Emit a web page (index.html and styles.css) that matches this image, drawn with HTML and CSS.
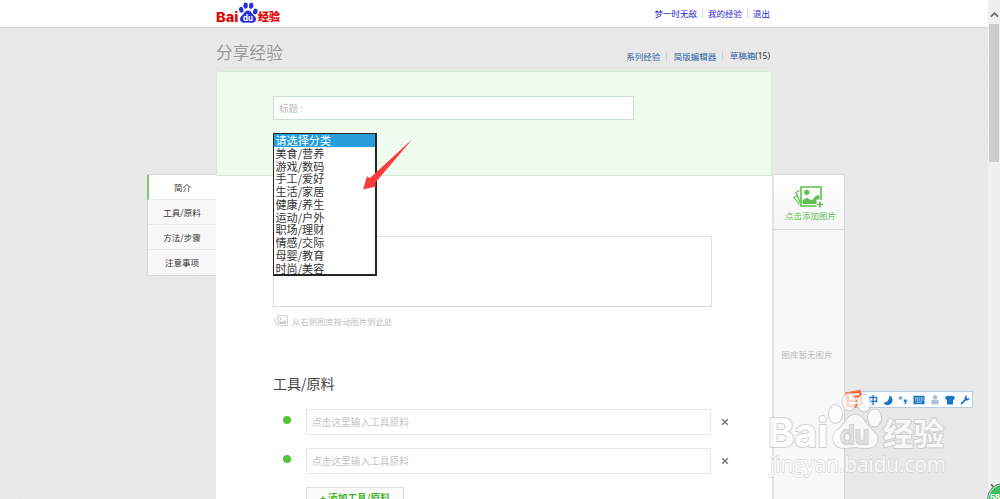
FILE: index.html
```html
<!DOCTYPE html>
<html lang="zh-CN">
<head>
  <meta charset="UTF-8" />
  <title>分享经验</title>
  <link rel="stylesheet" href="styles.css">
</head>
<body>

  <div class="page">
    <header class="topbar">
      <svg class="logo" viewBox="0 0 66 24" role="img" aria-label="Baidu经验">
        <text class="logo-red logo-latin" x="0" y="21.8" font-size="13.5" textLength="22.500" lengthAdjust="spacingAndGlyphs">Bai</text>
        <g fill="#2932e1">
          <ellipse cx="25.2" cy="9.8" rx="2.200" ry="3" transform="rotate(-14 25.2 9.8)"/>
          <ellipse cx="29.6" cy="5.500" rx="2.200" ry="3.1"/>
          <ellipse cx="35.2" cy="5.700" rx="2.200" ry="3.1" transform="rotate(8 35.2 5.7)"/>
          <ellipse cx="39.3" cy="11.500" rx="2.3" ry="2.9" transform="rotate(14 39.3 11.5)"/>
          <path d="M32 10.5c3 0 3.8 3 5.800 4.800c2.200 2 2.500 3.200 2 5c-.8 3-4.500 2.600-7.800 2.300c-3.300.3-7 .7-7.800-2.300c-.5-1.800 0-3.200 2-5c2-1.800 2.800-4.800 5.800-4.800z"/>
        </g>
        <text class="logo-du" x="27" y="20.8" font-size="8.5" textLength="10" lengthAdjust="spacingAndGlyphs">du</text>
        <text class="logo-red" x="42" y="21.3" font-size="11.500" textLength="22" lengthAdjust="spacingAndGlyphs">经验</text>
      </svg>
      <nav class="links user-links">
        <a>梦一时无敌</a><a>我的经验</a><a>退出</a>
      </nav>
    </header>

    <div class="title-row">
      <h1>分享经验</h1>
      <nav class="links tool-links">
        <a>系列经验</a><a>简版编辑器</a><a>草稿箱<span>(15)</span></a>
      </nav>
    </div>

    <div class="main">
      <ul class="side-nav">
        <li class="active">简介</li>
        <li>工具/原料</li>
        <li>方法/步骤</li>
        <li>注意事项</li>
      </ul>

      <div class="editor">
        <section class="base">
          <div class="field title-field">标题 :</div>
          <div class="category">
            <ul class="options">
              <li class="selected">请选择分类</li>
              <li>美食/营养</li>
              <li>游戏/数码</li>
              <li>手工/爱好</li>
              <li>生活/家居</li>
              <li>健康/养生</li>
              <li>运动/户外</li>
              <li>职场/理财</li>
              <li>情感/交际</li>
              <li>母婴/教育</li>
              <li>时尚/美容</li>
            </ul>
            <svg class="arrow" viewBox="0 0 50 52" aria-hidden="true">
              <path d="M49.500 0L12.500 43.500L12.800 47.500L0 50.500L4 37.500L7 39z" fill="#fb3a3a"/>
            </svg>
          </div>
        </section>

        <section class="content">
          <div class="brief"></div>
          <p class="drag-hint">
            <svg viewBox="0 0 14 12" aria-hidden="true">
              <path d="M4 .7h9.300v10H4z" fill="none" stroke="#ccc"/>
              <path d="M5 9V7l2-1 2 1 3-2v4z" fill="#ccc"/>
              <circle cx="7" cy="3.800" r="1.100" fill="#ccc"/>
              <path d="M2.500 2.500L.7 5l2 5" fill="none" stroke="#ccc"/>
            </svg>
            从右侧图库拖动图片到此处
          </p>

          <h2>工具/原料</h2>
          <div class="tool">
            <i class="dot"></i>
            <div class="field">点击这里输入工具原料</div>
            <svg class="remove" viewBox="0 0 8 8"><path d="M1.200 1.200l5.600 5.600M6.800 1.200L1.200 6.800"/></svg>
          </div>
          <div class="tool">
            <i class="dot"></i>
            <div class="field">点击这里输入工具原料</div>
            <svg class="remove" viewBox="0 0 8 8"><path d="M1.200 1.200l5.600 5.600M6.800 1.200L1.200 6.800"/></svg>
          </div>
          <div class="add-tool">+ 添加工具/原料</div>
        </section>
      </div>

      <aside class="gallery">
        <div class="add-picture">
          <svg viewBox="0 0 30 22" aria-hidden="true">
            <path d="M23.500 20H8V1h20v13" fill="none" stroke="#5fc04f" stroke-width="1.600"/>
            <circle cx="13.800" cy="6.300" r="2.600" fill="#5fc04f"/>
            <path d="M9.500 18v-3.500q4-4.500 7.500-1q2 1.500 4-1.500q2-3.500 5.500-2.500v4h-3v4.500z" fill="#5fc04f"/>
            <path d="M27 15.500v6M24 18.500h6" stroke="#5fc04f" stroke-width="1.600"/>
            <path d="M6.500 4.500L3 6.500l4 10M4.500 9.500L1 11.500l5.500 7" fill="none" stroke="#5fc04f" stroke-width="1.200"/>
          </svg>
          <span>点击添加图片</span>
        </div>
        <p class="empty">图库暂无图片</p>
      </aside>
    </div>
  </div>

  <div class="scrollbar">
    <svg class="up" viewBox="0 0 10 8"><path d="M1 6.500L5 2.500l4 4"/></svg>
    <div class="thumb"></div>
    <svg class="down" viewBox="0 0 10 8"><path d="M1 1.500L5 5.500l4-4"/></svg>
  </div>

  <!-- 输入法工具条 -->
  <div class="ime">
    <svg class="sogou" viewBox="0 0 20 20" aria-hidden="true">
      <path d="M1 3.500L16.500 .8L17.500 4L19 15L13 17L12 19L8 18L3 18z" fill="#fa6b3c"/>
      <path d="M15 5L6 6l.5 4L14.500 9.500L15 13.500L5 14.500" fill="none" stroke="#fff" stroke-width="2"/>
    </svg>
    <b>中</b>
    <svg viewBox="0 0 10 10"><path d="M6.500.5a5 5 0 1 1-6.200 7.200Q6 7.500 6.500.5z"/></svg>
    <svg viewBox="0 0 10 10"><circle cx="2.500" cy="3" r="1.800" fill="#69a8dc"/><path d="M5.800 4.500h2.800v2.300q0 2-2.100 2.700v-1.200q.7-.5.700-1.300H5.800z"/></svg>
    <svg class="wide" viewBox="0 0 12 10"><path d="M.5.8h11v8.400H.5z"/><path d="M2 3h8.500M2 5h8.500M3.500 7.200h5" stroke="#fff" stroke-dasharray="1.200 .7"/></svg>
    <svg class="muted" viewBox="0 0 10 10"><circle cx="5" cy="2.300" r="2.200"/><path d="M1 6.500q0-2 4-2t4 2L8 9.500H2z"/></svg>
    <svg viewBox="0 0 10 10"><path d="M3 .5q2 1.500 4 0l3 1.800-1 2.700-1-.5v5H2v-5l-1 .5-1-2.700z"/></svg>
    <svg viewBox="0 0 10 10"><path d="M.6 8.300l4-4Q4 .8 7.500.5L6.300 2.300l1.500 1.500L9.500 2.500Q9.500 6 5.800 5.500l-4 4q-1.200 0-1.200-1.200z"/></svg>
  </div>

  <div class="ball"><span>58</span></div>

  <svg class="watermark" viewBox="0 0 190 84" aria-hidden="true">
    <text class="wm-bold" x="3" y="47" font-size="40" textLength="60" lengthAdjust="spacingAndGlyphs">Bai</text>
    <g class="wm-paw">
      <ellipse cx="70.500" cy="14" rx="6.500" ry="9"/>
      <ellipse cx="84" cy="2" rx="6.500" ry="8.500"/>
      <ellipse cx="99" cy="3" rx="6.500" ry="8.500"/>
      <ellipse cx="109.500" cy="18" rx="6.500" ry="8.500"/>
      <path d="M90 15c8 0 10 8 15 13c7 6 9 10 7 14c-3 8-13 6-22 5c-9 1-17 3-21-5c-2-5-1-9 6-14c6-5 7-13 15-13z"/>
    </g>
    <text class="wm-du" x="75" y="44" font-size="25" textLength="29" lengthAdjust="spacingAndGlyphs">du</text>
    <text class="wm-bold" x="118" y="45" font-size="31" textLength="61" lengthAdjust="spacingAndGlyphs">经验</text>
    <text class="wm-url" x="5" y="72" font-size="22" textLength="176" lengthAdjust="spacingAndGlyphs">jingyan.baidu.com</text>
  </svg>

</body>
</html>
```

FILE: styles.css
```css
* {
  box-sizing: border-box;
}
body {
  margin: 0;
  height: 499px;
  display: flex;
  overflow: hidden;
  position: relative;
  background: #e8e8e8;
  color: #333;
  font-family: "Noto Sans CJK SC", sans-serif;
  font-size: 8.5px;
}
h1, h2, p, ul {
  margin: 0;
  padding: 0;
  font-weight: 400;
  list-style: none;
}
svg {
  flex: none;
  overflow: visible;
}
.page {
  width: 988px;
  height: 499px;
  overflow: hidden;
  background: repeating-linear-gradient(45deg, #e9e9e9 0 2px, #e7e7e7 2px 3px);
}

/* Header */
.topbar {
  height: 28px;
  padding: 0 218px 0 216px;
  display: flex;
  justify-content: space-between;
  background: #fff;
  border-bottom: 1px solid #d2d2d2;
}
.logo {
  width: 66px;
  height: 24px;
}
.logo-red {
  fill: #e10602;
  font-family: "Noto Sans CJK SC", sans-serif;
  font-weight: 900;
}
.logo-latin {
  font-family: Inter, sans-serif;
  font-weight: 800;
}
.logo-du {
  fill: #fff;
  font-family: Inter, sans-serif;
  font-weight: 700;
}
.links {
  display: flex;
  align-items: center;
  line-height: 12px;
}
.user-links {
  height: 26px;
}
.links a + a {
  position: relative;
}
.links a + a::before {
  content: "";
  position: absolute;
  top: 2px;
  height: 9px;
  border-left: 1px solid #d2d2d2;
}
.user-links {
  gap: 11px;
  color: #2a1fd0;
}
.user-links a + a::before {
  left: -6px;
}
.tool-links {
  gap: 13.5px;
  color: #2c62a8;
}
.tool-links a + a::before {
  left: -8px;
}
.tool-links span {
  color: #333;
  font-family: "Noto Sans", sans-serif;
}
.title-row {
  height: 43px;
  padding: 8px 218px 0 216px;
  display: flex;
  justify-content: space-between;
}
.title-row h1 {
  color: #999;
  font-size: 16.7px;
  line-height: 33px;
}
.tool-links {
  height: 39px;
}

/* Layout */
.main {
  height: 428px;
  padding-left: 147px;
  display: flex;
  align-items: flex-start;
}
.side-nav {
  width: 69px;
  margin-top: 103px;
  background: #f8f8f8;
  border: 1px solid #d8d8d8;
  border-right: none;
}
.side-nav li {
  height: 25px;
  line-height: 24px;
  text-align: center;
  border-bottom: 1px solid #e8e8e8;
}
.side-nav li:last-child {
  border-bottom: none;
}
.side-nav .active {
  background: #fff;
  margin-left: -1px;
  border-left: 2px solid #7ccb72;
}
.editor {
  width: 556px;
  height: 440px;
  background: #fff;
  border-radius: 3px 3px 0 0;
}
.base {
  height: 105px;
  padding: 24px 0 0 56px;
  background: #f0fbf0;
  border: 1px solid #d6e8d6;
  border-radius: 3px 3px 0 0;
}
.field {
  background: #fff;
  border: 1px solid #e6e6e6;
  color: #bbb;
  padding-left: 5px;
}
.title-field {
  width: 361px;
  height: 24px;
  line-height: 22px;
  border-color: #cfe0cf;
  font-size: 9.5px;
}

/* Category list, opened over the form */
.category {
  position: relative;
  margin-top: 13px;
}
.options {
  position: absolute;
  z-index: 2;
  width: 104px;
  height: 143px;
  background: #fff;
  border: 1px solid #252525;
  border-right-width: 2px;
  border-bottom-width: 2px;
  color: #333;
  font-size: 11.1px;
}
.options li {
  height: 12.75px;
  line-height: 12.75px;
  padding-left: 1.5px;
}
.options .selected {
  background: #259edb;
  color: #fff;
}
.arrow {
  position: absolute;
  z-index: 3;
  left: 90px;
  top: 6px;
  width: 50px;
  height: 52px;
}

.content {
  padding: 60px 60px 0 57px;
}
.brief {
  height: 71px;
  border: 1px solid #ddd;
}
.drag-hint {
  display: flex;
  align-items: center;
  gap: 4px;
  height: 12px;
  margin-top: 8px;
  padding-left: 1px;
  color: #c0c0c0;
  font-size: 8.4px;
  line-height: 11px;
}
.drag-hint svg {
  width: 14px;
  height: 12px;
}
.content h2 {
  margin-top: 46px;
  height: 20px;
  line-height: 20px;
  font-size: 14px;
  color: #444;
}
.tool {
  display: flex;
  align-items: center;
  margin-top: 13px;
  padding-left: 10px;
  width: 460px;
}
.content h2 + .tool {
  margin-top: 16px;
}
.tool .field {
  width: 405px;
  height: 26px;
  line-height: 24px;
  font-size: 9.7px;
  color: #c4c4c4;
}
.dot {
  width: 8px;
  height: 8px;
  margin: -4px 15px 0 0;
  border-radius: 50%;
  background: #50c535;
}
.remove {
  width: 8px;
  height: 8px;
  margin-left: 10px;
  stroke: #777;
  stroke-width: 1.5;
}
.add-tool {
  width: 98px;
  height: 26px;
  margin: 13px 0 0 33px;
  border: 1px solid #ddd;
  background: #fbfbfb;
  color: #45b52f;
  font-size: 9.7px;
  font-weight: 700;
  line-height: 21px;
  text-align: center;
}

/* Gallery */
.gallery {
  width: 73px;
  height: 340px;
  margin-top: 103px;
  background: #f8f8f8;
  border: 1px solid #d8d8d8;
  border-left: 2px solid #e2e2e2;
  border-radius: 0 4px 0 0;
}
.add-picture {
  height: 55px;
  padding: 11px 0 0 3px;
  display: flex;
  flex-direction: column;
  align-items: center;
  background: linear-gradient(#fff, #f5f5f5);
  border-bottom: 1px solid #d8d8d8;
  border-radius: 0 3px 0 0;
  color: #5fc04f;
  line-height: 13px;
}
.add-picture svg {
  width: 30px;
  height: 22px;
  margin-left: -6px;
}
.add-picture span {
  margin-top: 1px;
  white-space: nowrap;
}
.empty {
  margin: 118px 4px 0 0;
  line-height: 12px;
  color: #bbb;
  text-align: center;
}

/* Scrollbar */
.scrollbar {
  width: 12px;
  height: 499px;
  padding: 11px 1px 9px;
  display: flex;
  flex-direction: column;
  align-items: center;
  background: #f0f0f0;
}
.scrollbar svg {
  width: 9px;
  height: 7px;
  fill: none;
  stroke: #666;
  stroke-width: 2;
}
.thumb {
  width: 10px;
  height: 138px;
  margin-top: 6px;
  background: #cdcdcd;
}
.down {
  margin-top: auto;
}

/* Floating widgets */
.ime {
  position: absolute;
  left: 852px;
  top: 391px;
  width: 121px;
  height: 17px;
  padding: 0 2px 0 15px;
  display: flex;
  align-items: center;
  justify-content: space-between;
  background: #fbfdff;
  border: 1px solid #b9cde0;
  fill: #1b74c8;
  color: #1b74c8;
}
.ime b {
  font-size: 10px;
  line-height: 15px;
}
.ime svg {
  width: 10px;
  height: 10px;
}
.ime .wide {
  width: 12px;
}
.ime .muted {
  fill: #b3bfd4;
}
.ime .sogou {
  position: absolute;
  left: -9px;
  top: -3px;
  width: 20px;
  height: 20px;
}
.ball {
  position: absolute;
  left: 987px;
  top: 483px;
  width: 32px;
  height: 32px;
  padding: 7px 0 0 2px;
  border: 1px solid #888;
  border-radius: 50%;
  background: #42bf5d;
  box-shadow: inset 0 0 0 1px #d5f2da;
  color: #fff;
  font: 700 9px/12px "Liberation Sans", sans-serif;
}
.watermark {
  position: absolute;
  left: 765px;
  top: 400px;
  width: 190px;
  height: 84px;
  fill: #fff;
  stroke: #c4c4c4;
  stroke-width: 2;
  stroke-linejoin: round;
  paint-order: stroke;
  opacity: 0.72;
}
.wm-bold {
  font-family: Inter, "Noto Sans CJK SC", sans-serif;
  font-weight: 700;
}
.wm-du {
  font-family: Inter, sans-serif;
  font-weight: 600;
  fill: #dcdcdc;
}
.wm-url {
  font-family: "Open Sans", sans-serif;
  stroke: #d0d0d0;
  stroke-width: 1.5;
}
```
